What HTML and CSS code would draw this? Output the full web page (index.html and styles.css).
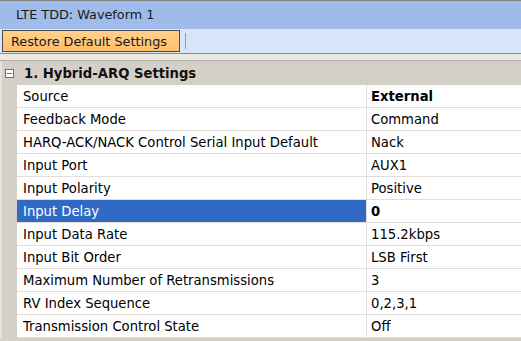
FILE: index.html
```html
<!DOCTYPE html>
<html lang="en">
<head>
    <meta charset="UTF-8">
    <title>LTE TDD: Waveform 1</title>
    <link rel="stylesheet" href="styles.css">
</head>
<body>
    <div class="title-bar">LTE TDD: Waveform 1</div>
    <div class="toolbar">
        <button class="restore-btn">Restore Default Settings</button>
        <span class="tool-sep"></span>
    </div>
    <div class="strip"></div>
    <div class="panel">
        <div class="group-header">
            <span class="collapse-box"></span>
            <span>1. Hybrid-ARQ Settings</span>
        </div>
        <div class="grid">
            <div class="row"><div class="name">Source</div><div class="value bold">External</div></div>
            <div class="row"><div class="name">Feedback Mode</div><div class="value">Command</div></div>
            <div class="row"><div class="name">HARQ-ACK/NACK Control Serial Input Default</div><div class="value">Nack</div></div>
            <div class="row"><div class="name">Input Port</div><div class="value">AUX1</div></div>
            <div class="row"><div class="name">Input Polarity</div><div class="value">Positive</div></div>
            <div class="row selected"><div class="name">Input Delay</div><div class="value bold">0</div></div>
            <div class="row"><div class="name">Input Data Rate</div><div class="value">115.2kbps</div></div>
            <div class="row"><div class="name">Input Bit Order</div><div class="value">LSB First</div></div>
            <div class="row"><div class="name">Maximum Number of Retransmissions</div><div class="value">3</div></div>
            <div class="row"><div class="name">RV Index Sequence</div><div class="value">0,2,3,1</div></div>
            <div class="row"><div class="name">Transmission Control State</div><div class="value">Off</div></div>
        </div>
    </div>
</body>
</html>
```

FILE: styles.css
```css
body {
    margin: 0;
    padding: 0;
    width: 521px;
    height: 341px;
    overflow: hidden;
    font-family: "DejaVu Sans", Verdana, sans-serif;
    color: #000;
    background-color: #d4d0c8;
    border-top: 1px solid #808080;
    box-sizing: border-box;
}

.title-bar {
    height: 28px;
    line-height: 28px;
    padding-left: 16px;
    background-color: #9ebbea;
    font-size: 12.8px;
    color: #1a1a1a;
}

.toolbar {
    height: 24px;
    display: flex;
    align-items: center;
    padding-left: 2px;
    background-color: #d8e5f8;
    border-bottom: 1px solid #6b8cc9;
}

.restore-btn {
    height: 22px;
    width: 178px;
    margin: 0;
    padding: 0 0 0 8px;
    text-align: left;
    font-family: "DejaVu Sans", Verdana, sans-serif;
    font-size: 12.8px;
    color: #1a1a1a;
    background: linear-gradient(#ffd08e, #ffbf6c);
    border: 1px solid #4a4a4a;
    border-radius: 0;
}

.tool-sep {
    width: 1px;
    height: 16px;
    margin-left: 5px;
    background-color: #7f9dc9;
}

.strip {
    height: 6px;
    background-color: #ece9e0;
    border-bottom: 1px solid #b3b0a7;
}

.panel {
    border-left: 2px solid #e6e3dc;
}

.group-header {
    height: 24px;
    display: flex;
    align-items: center;
    padding-left: 3px;
    font-size: 13.2px;
    font-weight: bold;
    color: #111;
}

.collapse-box {
    width: 7px;
    height: 7px;
    margin-right: 10px;
    border: 1px solid #6f6f6f;
    background: linear-gradient(#6f6f6f, #6f6f6f) center / 5px 1px no-repeat, #fff;
}

.grid {
    margin-left: 15px;
    background-color: #fff;
}

.row {
    display: flex;
    height: 22px;
    border-bottom: 1px solid #e0ded6;
    font-size: 13.2px;
}

.name {
    width: 343px;
    padding-left: 6px;
    line-height: 23px;
    border-right: 1px solid #e0ded6;
    white-space: nowrap;
    overflow: hidden;
}

.value {
    flex: 1;
    padding-left: 4px;
    line-height: 23px;
    white-space: nowrap;
}

.bold {
    font-weight: bold;
}

.selected .name {
    background-color: #316ac5;
    color: #fff;
}
```
